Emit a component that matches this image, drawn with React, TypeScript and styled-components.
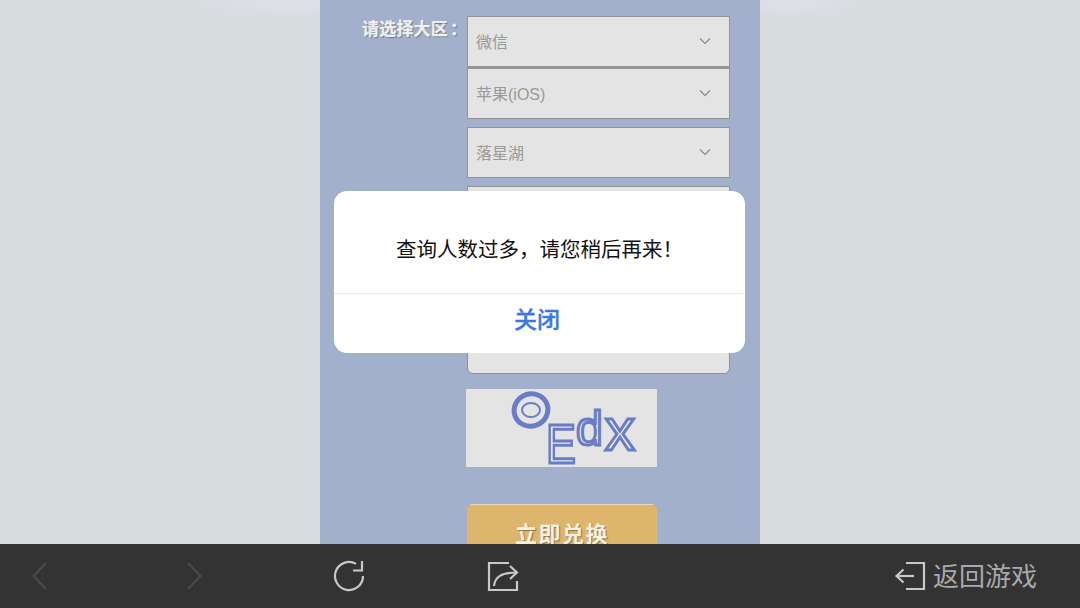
import styled, { createGlobalStyle } from "styled-components";

const GlobalStyle = createGlobalStyle`
  html, body {
    margin: 0;
    padding: 0;
    width: 1080px;
    height: 608px;
    overflow: hidden;
    background: #d7dcdf;
    font-family: "Liberation Sans", "Noto Sans CJK SC", sans-serif;
  }
`;

const Screen = styled.div`
  width: 1080px;
  height: 608px;
  display: flex;
  flex-direction: column;
`;

const WebView = styled.div`
  position: relative;
  height: 544px;
  overflow: hidden;
  display: flex;
  justify-content: center;
  background:
    radial-gradient(ellipse 110px 22px at 290px 0, #dfe1e8 0%, rgba(223, 225, 232, 0) 100%),
    radial-gradient(ellipse 80px 22px at 790px 0, #dfe1e8 0%, rgba(223, 225, 232, 0) 100%),
    #d7dcdf;
`;

const Column = styled.div`
  width: 440px;
  height: 544px;
  box-sizing: border-box;
  padding-top: 16px;
  background: #a3b0cb;
  display: flex;
  align-items: flex-start;
`;

const Label = styled.div`
  width: 147px;
  box-sizing: border-box;
  padding: 3px 0 0 42px;
  flex-shrink: 0;
  white-space: nowrap;
  font-size: 17px;
  line-height: 22px;
  letter-spacing: 0.2px;
  font-weight: 700;
  color: #f0f0f0;
  -webkit-text-stroke: 0.25px #f0f0f0;
  text-shadow: 1px 1px 1px #6f7480;
`;

const Colon = styled.span`
  margin-left: 2px;
`;

const Fields = styled.div`
  width: 263px;
  display: flex;
  flex-direction: column;
`;

const SelectBox = styled.div<{ $gap: number }>`
  box-sizing: border-box;
  height: ${({ $gap }) => ($gap === 0 ? "52px" : "51px")};
  margin-bottom: ${({ $gap }) => $gap}px;
  padding: 0 18px 2px 8px;
  background: #e4e4e4;
  border: 1px solid #959595;
  display: flex;
  align-items: center;
  justify-content: space-between;
  font-size: 16px;
  color: #999;
  &:first-child {
    border-bottom-width: 2px;
  }
`;

const InputBox = styled.div`
  box-sizing: border-box;
  height: 56px;
  background: #e4e4e4;
  border: 1px solid #8f8f8f;
  border-radius: 0 0 6px 6px;
  margin-top: 21px;
`;

const Captcha = styled.svg`
  display: block;
  width: 191px;
  height: 78px;
  margin: 15px 0 0 -1px;
  background: #e4e4e4;
`;

const RedeemButton = styled.div`
  box-sizing: border-box;
  width: 190px;
  height: 60px;
  margin-top: 37px;
  padding-top: 13px;
  background: #deb56c;
  border-top: 1px solid #e9d9b4;
  clip-path: polygon(
    4px 0,
    calc(100% - 4px) 0,
    100% 4px,
    100% 100%,
    0 100%,
    0 4px
  );
  text-align: center;
  font-size: 22px;
  line-height: 34px;
  letter-spacing: 1.5px;
  font-weight: 700;
  color: #f6f0e2;
  text-shadow: 1px 1px 1px #8f7240;
`;

const Overlay = styled.div`
  position: absolute;
  inset: 0;
  display: flex;
  align-items: center;
  justify-content: center;
`;

const Dialog = styled.div`
  width: 411px;
  height: 162px;
  margin-left: -1px;
  background: #fff;
  border-radius: 13px;
  display: flex;
  flex-direction: column;
`;

const Message = styled.div`
  height: 103px;
  box-sizing: border-box;
  padding-top: 47px;
  border-bottom: 1px solid #e8e8e8;
  text-align: center;
  font-size: 20.5px;
  line-height: 24px;
  color: #111;
`;

const CloseButton = styled.div`
  flex: 1;
  padding: 0 5px 12px 0;
  display: flex;
  align-items: center;
  justify-content: center;
  font-size: 23px;
  font-weight: 500;
  color: #3a78e0;
  -webkit-text-stroke: 0.35px #3a78e0;
`;

const Toolbar = styled.div`
  height: 64px;
  box-sizing: border-box;
  padding: 0 43px 0 8px;
  background: #333;
  display: flex;
  align-items: center;
`;

const ToolSlot = styled.div`
  width: 64px;
  margin-right: 90px;
  display: flex;
  justify-content: center;
`;

const BackToGame = styled.div`
  margin-left: auto;
  display: flex;
  align-items: center;
  gap: 7px;
  font-size: 26px;
  color: #a9a9a9;
`;

const BackText = styled.span`
  margin-top: -3px;
`;

const Chevron = () => (
  <svg width="12" height="8" viewBox="0 0 12 8" fill="none" stroke="#8a8a8a" strokeWidth="1.2">
    <path d="M1 1.5 L6 6.5 L11 1.5" />
  </svg>
);

const selects = [
  { id: 1, text: "微信", gap: 0 },
  { id: 2, text: "苹果(iOS)", gap: 8 },
  { id: 3, text: "落星湖", gap: 8 },
  { id: 4, text: "", gap: 8 },
  { id: 5, text: "", gap: 0 },
];

export default function App() {
  return (
    <Screen>
      <GlobalStyle />
      <WebView>
        <Column>
          <Label>
            请选择大区<Colon>：</Colon>
          </Label>
          <Fields>
            {selects.map((s) => (
              <SelectBox key={s.id} $gap={s.gap}>
                {s.text}
                <Chevron />
              </SelectBox>
            ))}
            <InputBox />
            <Captcha viewBox="0 0 191 78">
              <g fontFamily="Liberation Sans, sans-serif" fill="#e9ebf3" stroke="#6a7dc4" strokeWidth="3">
                <ellipse cx="65" cy="21" rx="17" ry="16" transform="rotate(-20 65 21)" fill="none" strokeWidth="5" />
                <ellipse cx="65" cy="21" rx="9" ry="7" fill="none" strokeWidth="2" />
                <text x="0" y="0" fontSize="56" transform="translate(80 74) scale(0.8 1)">E</text>
                <text x="110" y="56" fontSize="48">d</text>
                <text x="139" y="61" fontSize="60">x</text>
              </g>
            </Captcha>
            <RedeemButton>立即兑换</RedeemButton>
          </Fields>
        </Column>
        <Overlay>
          <Dialog>
            <Message>查询人数过多，请您稍后再来！</Message>
            <CloseButton>关闭</CloseButton>
          </Dialog>
        </Overlay>
      </WebView>
      <Toolbar>
        <ToolSlot>
          <svg width="18" height="30" viewBox="0 0 18 30" fill="none" stroke="#4c4c4c" strokeWidth="2">
            <path d="M15 2 L2.5 15 L15 28" />
          </svg>
        </ToolSlot>
        <ToolSlot>
          <svg width="18" height="30" viewBox="0 0 18 30" fill="none" stroke="#4c4c4c" strokeWidth="2">
            <path d="M3 2 L15.5 15 L3 28" />
          </svg>
        </ToolSlot>
        <ToolSlot>
          <svg width="32" height="32" viewBox="0 0 32 32" fill="none" stroke="#c8c8c8" strokeWidth="2.2">
            <path d="M24 3.9 A14 14 0 1 0 31 16" />
            <path d="M30 1 V10.5 H21" />
          </svg>
        </ToolSlot>
        <ToolSlot>
          <svg width="34" height="32" viewBox="0 0 34 32" fill="none" stroke="#c8c8c8" strokeWidth="2.2">
            <path d="M24 3 H4 V30 H32 V21" />
            <path d="M9 26 C10 17 16 12.5 32 12.5" />
            <path d="M25 6 L32 12.5 L25 19" />
          </svg>
        </ToolSlot>
        <BackToGame>
          <svg width="32" height="28" viewBox="0 0 32 28" fill="none" stroke="#c8c8c8" strokeWidth="2.2">
            <path d="M12 1 H30 V27 H12" />
            <path d="M20 14 H3" />
            <path d="M9.5 7.5 L2.5 14 L9.5 20.5" />
          </svg>
          <BackText>返回游戏</BackText>
        </BackToGame>
      </Toolbar>
    </Screen>
  );
}
